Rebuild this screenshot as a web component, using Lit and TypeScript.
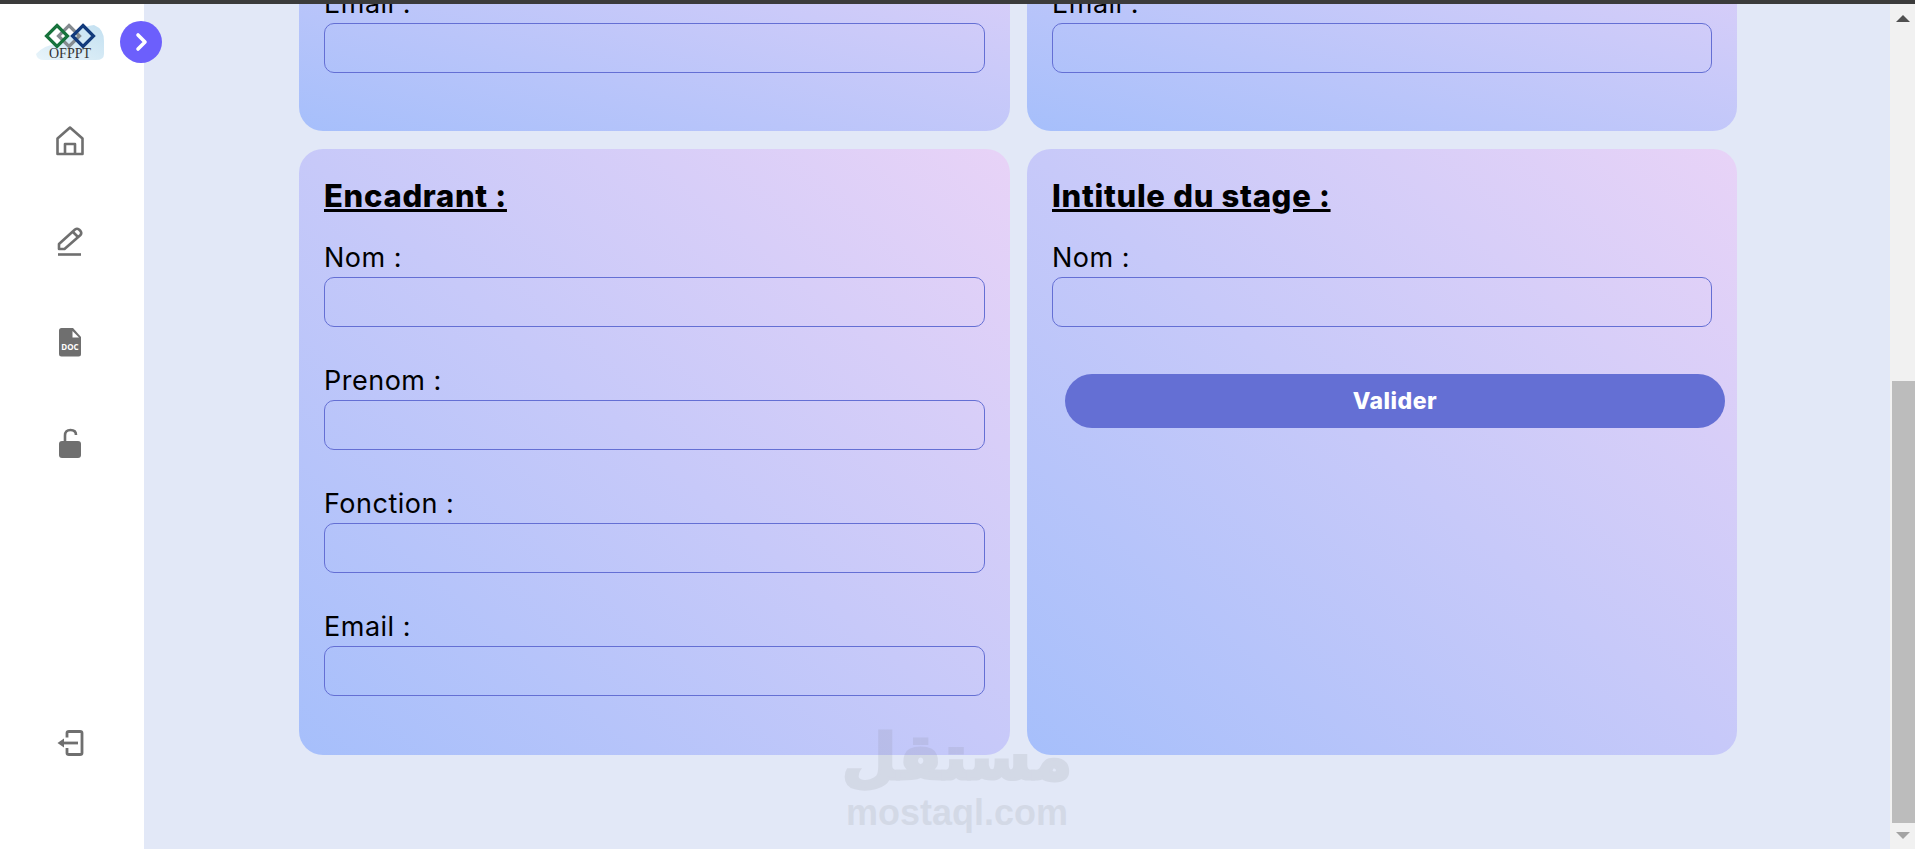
import { LitElement, html, css } from "lit";
import { customElement } from "lit/decorators.js";

const field = (label: string) => html`
  <div class="field">
    <label>${label}</label>
    <div class="input"></div>
  </div>
`;

@customElement("app-root")
export class AppRoot extends LitElement {
  static styles = css`
    :host { display: flex; flex-direction: column; height: 849px; width: 1915px; overflow: hidden; position: relative; font-family: Inter, "Open Sans", sans-serif; color: #000; background: #e2e8f7; }
    .topbar { height: 4px; background: #3b3b3b; flex: none; }
    .page { flex: 1; display: flex; min-height: 0; }
    .side { width: 144px; flex: none; background: #fff; display: flex; flex-direction: column; align-items: center; padding: 0 4px 90px 0; box-sizing: border-box; }
    .logo { width: 68px; height: 43px; margin: 13px 0 0; display: block; flex: none; }
    .logo text { font-family: "Liberation Serif", serif; font-size: 14px; fill: #333; }
    nav { display: flex; flex-direction: column; align-items: center; gap: 68.5px; margin-top: 64px; }
    nav svg, .out { display: block; width: 32px; height: 32px; flex: none; }
    .out { margin-top: auto; }
    .main { flex: 1; min-width: 0; overflow: hidden; display: flex; flex-direction: column; justify-content: flex-end; padding: 0 153px 94px 155px; }
    .grid { display: grid; grid-template-columns: 711px 710px; column-gap: 17px; row-gap: 18px; flex: none; }
    .card { border-radius: 24px; padding: 0 25px; background: linear-gradient(to top right, #a6bffb, #e8d3f7); box-sizing: border-box; }
    .card.top { padding-bottom: 58px; padding-top: 40px; background: linear-gradient(to top right, #a6bffb 0%, #dfd0f8 100%); }
    .card.low { height: 606px; padding-top: 27px; }
    h2 { margin: 0 0 24px; font-size: 31px; line-height: 40px; font-weight: 800; text-decoration: underline; letter-spacing: 0.7px; }
    .field { display: flex; flex-direction: column; margin-bottom: 22px; }
    .field:last-child { margin-bottom: 0; }
    label { font-size: 27px; line-height: 36px; font-weight: 400; height: 37px; margin-top: 14px; letter-spacing: 0.5px; }
    h2 + .field label { margin-top: 0; }
    .input { height: 50px; border: 1px solid #646fd4; border-radius: 10px; box-sizing: border-box; width: 100%; }
    .submit { display: block; width: 660px; height: 54px; margin: 47px 0 0 13px; border: 0; border-radius: 27px; background: #646fd4; color: #fff; font: 800 23px Inter, sans-serif; letter-spacing: 0.5px; }
    .scroll { width: 25px; flex: none; background: #f1f1f1; display: flex; flex-direction: column; align-items: center; padding-left: 1px; box-sizing: border-box; }
    .arrow { width: 14px; height: 7px; flex: none; }
    .up { margin-top: 11px; background: #505050; clip-path: polygon(50% 0, 100% 100%, 0 100%); }
    .thumb { width: 23px; height: 442px; background: #bcbcbc; margin-top: auto; flex: none; }
    .down { margin: 9px 0 10px; background: #a3a3a3; clip-path: polygon(0 0, 100% 0, 50% 100%); }
    .toggle { position: absolute; left: 120px; top: 21px; width: 42px; height: 42px; border-radius: 50%; background: #6c5ffc; border: 0; padding: 0; display: flex; align-items: center; justify-content: center; }
    .mark { position: absolute; left: 846px; top: 720px; width: 222px; display: flex; flex-direction: column; align-items: center; color: #78787d; opacity: .13; pointer-events: none; }
    .ar { font: 700 63px/76px "DejaVu Sans", sans-serif; height: 76px; white-space: nowrap; -webkit-text-stroke: 3px #78787d; }
    .lat { font: 700 36px/38px "Liberation Sans", sans-serif; margin-top: -2px; white-space: nowrap; }
  `;

  render() {
    return html`
      <div class="topbar"></div>
      <div class="page">
        <aside class="side">
          <svg class="logo" viewBox="0 0 68 43">
            <defs><linearGradient id="c" x1="0" y1="1" x2="1" y2="0"><stop offset="0" stop-color="#e8f4fa"/><stop offset="1" stop-color="#c3e0f1"/></linearGradient></defs>
            <path d="M0 37 Q10 26 24 28 Q40 10 58 8 Q68 12 68 24 V37 Q68 43 60 43 H8 Q1 43 0 37Z" fill="url(#c)"/>
            <path d="M33 8.5 L43.5 19 L33 29.5 L22.5 19Z" fill="none" stroke="#858b90" stroke-width="3.2"/>
            <path d="M21 8.5 L31.5 19 L21 29.5 L10.5 19Z" fill="none" stroke="#17733c" stroke-width="3.2"/>
            <path d="M47 8.5 L57.5 19 L47 29.5 L36.5 19Z" fill="none" stroke="#123a7c" stroke-width="3.2"/>
            <text x="34" y="41" text-anchor="middle" textLength="42">OFPPT</text>
          </svg>
          <nav>
            <svg viewBox="0 0 32 32" fill="none" stroke="#6f6f6f" stroke-width="2.6" stroke-linejoin="round"><path d="M16 3.5 L28.5 14.5 V30 H3.5 V14.5 Z"/><path d="M11 30 V20 H21 V30"/></svg>
            <svg viewBox="0 0 32 32" fill="none" stroke="#6f6f6f" stroke-width="2.6" stroke-linejoin="round"><path d="M5 24 V19 L21 4.5 Q23 3 25 4.5 L26.5 6 Q28 8 26.5 10 L10.5 24 Z"/><path d="M19 7 L24 12"/><path d="M4 29.5 H27"/></svg>
            <svg viewBox="0 0 32 32"><g transform="translate(0 1)"><path d="M7.5 2 H19 L27 11 V28 Q27 30.5 24.5 30.5 H7.5 Q5 30.5 5 28 V4.5 Q5 2 7.5 2Z" fill="#6f6f6f"/><path d="M18.5 5 V11.5 H25Z" fill="#fff"/><text x="16" y="24" text-anchor="middle" font-family="'Open Sans',sans-serif" font-weight="700" font-size="8" fill="#fff">DOC</text></g></svg>
            <svg viewBox="0 0 32 32"><path d="M11 16 V9.5 Q11 4 16.5 4 Q22 4 22 9" fill="none" stroke="#6f6f6f" stroke-width="2.6"/><rect x="5" y="15" width="22" height="17" rx="3" fill="#6f6f6f"/></svg>
          </nav>
          <svg class="out" viewBox="0 0 32 32" fill="none" stroke="#6f6f6f" stroke-width="2.8"><path d="M13 10.5 V6 Q13 4.5 15 4.5 H26 Q28 4.5 28 6 V26 Q28 27.5 26 27.5 H15 Q13 27.5 13 26 V21"/><path d="M8 16 H24"/><path d="M10 11.5 L3.5 16 L10 20.5Z" fill="#6f6f6f" stroke="none"/></svg>
        </aside>
        <main class="main">
          <div class="grid">
            <section class="card top">${field("Email :")}</section>
            <section class="card top">${field("Email :")}</section>
            <section class="card low">
              <h2>Encadrant :</h2>
              ${field("Nom :")}${field("Prenom :")}${field("Fonction :")}${field("Email :")}
            </section>
            <section class="card low">
              <h2>Intitule du stage :</h2>
              ${field("Nom :")}
              <button class="submit">Valider</button>
            </section>
          </div>
        </main>
        <div class="scroll">
          <div class="arrow up"></div>
          <div class="thumb"></div>
          <div class="arrow down"></div>
        </div>
      </div>
      <button class="toggle" aria-label="Ouvrir">
        <svg width="16" height="20" viewBox="0 0 16 20" fill="none" stroke="#fff" stroke-width="3.6" stroke-linecap="round" stroke-linejoin="round"><path d="M5 3 L12 10 L5 17"/></svg>
      </button>
      <div class="mark">
        <div class="ar" dir="rtl" lang="ar">مستقل</div>
        <div class="lat">mostaql.com</div>
      </div>
    `;
  }
}
